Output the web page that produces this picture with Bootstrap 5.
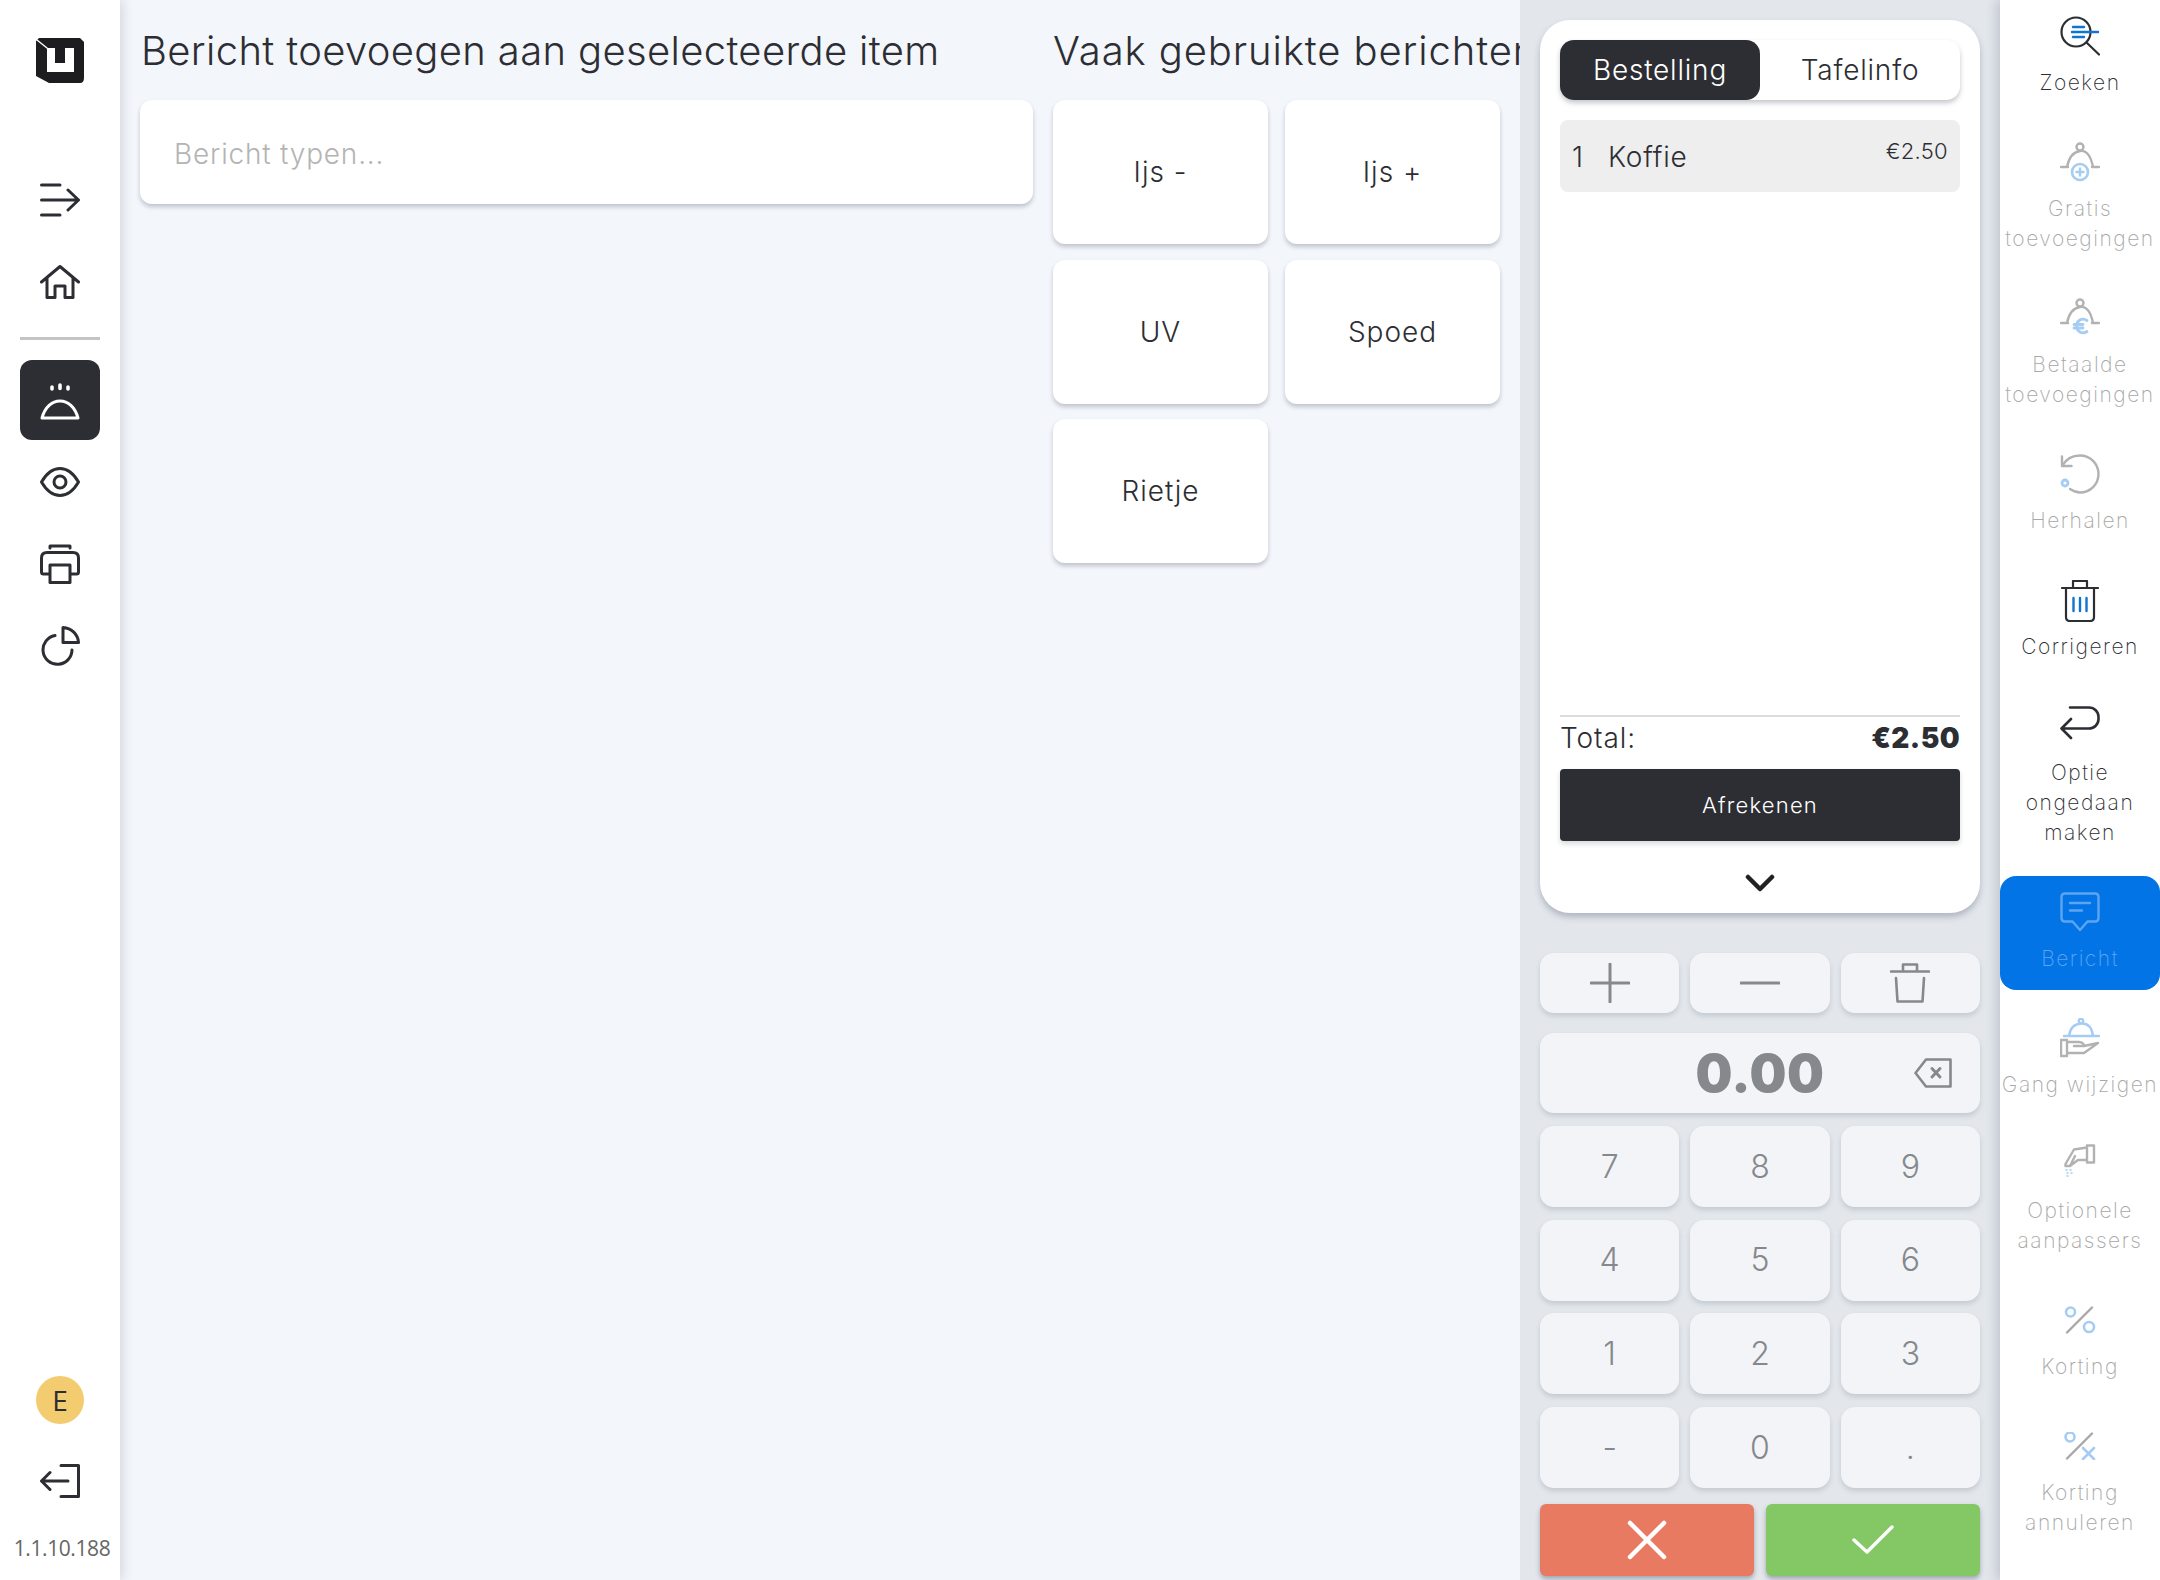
<!DOCTYPE html>
<html lang="nl">
<head>
  <meta charset="UTF-8" />
  <title>Bericht</title>
  <link href="https://cdn.jsdelivr.net/npm/bootstrap@5.3.3/dist/css/bootstrap.min.css" rel="stylesheet">
  <style>
    html, body { height: 100%; }
    body { width: 2160px; height: 1580px; overflow: hidden; background: #f3f6fb; color: #2d2e33; font-family: Inter, "Liberation Sans", sans-serif; font-weight: 300; }
    svg { display: block; fill: none; stroke-linecap: round; stroke-linejoin: round; }

    .left-bar { width: 120px; background: #fff; box-shadow: 3px 0 10px rgba(60,70,90,.16); z-index: 3; padding-top: 38px; }
    .logo-box { height: 122px; }
    .nav-box { width: 80px; height: 80px; margin-bottom: 2px; border-radius: 12px; color: #2d2e33; }
    .nav-box.is-active { background: #2d2e33; color: #fff; }
    .nav-rule { width: 80px; height: 3px; background: #c4c4c4; margin: 13px 0 20px; }
    .user-dot { width: 48px; height: 48px; border-radius: 50%; background: #f3cc70; font: 400 28px "Open Sans", sans-serif; color: #2d2e33; }
    .version-txt { font: 400 21px/30px "Open Sans", sans-serif; color: #666; letter-spacing: -.4px; margin: 35px 0 17px; padding-left: 4px; white-space: nowrap; }

    .msg-col { width: 913px; padding: 0 0 0 20px; }
    .freq-col { width: 487px; padding-left: 20px; overflow: hidden; }
    .head-txt { font-size: 40px; font-weight: 300; line-height: 48px; letter-spacing: .9px; margin: 27px 0 25px; white-space: nowrap; }
    .msg-col .head-txt { letter-spacing: .35px; padding-left: 1px; }
    .msg-input.form-control { height: 104px; border: 0; border-radius: 12px; padding: 4px 34px 0; font-size: 28px; font-weight: 300; letter-spacing: .8px; box-shadow: 0 3px 4px rgba(60,70,90,.28); }
    .msg-input::placeholder { color: #b4b4b4; }
    .tile-grid { display: grid; grid-template-columns: 215px 215px; grid-auto-rows: 144px; column-gap: 17px; row-gap: 15.5px; }
    .tile-btn.btn { background: #fff; border: 0; border-radius: 12px; color: #2d2e33; font-size: 28px; font-weight: 300; letter-spacing: 1px; box-shadow: 0 3px 4px rgba(60,70,90,.28); }

    .order-panel { width: 480px; background: #e3e7ec; padding: 20px 20px 0; }
    .order-card.card { height: 893px; border: 0; border-radius: 30px; padding: 20px 20px 0; box-shadow: 0 4px 6px rgba(60,70,90,.3); }
    .tab-wrap { height: 60px; border-radius: 14px; box-shadow: 0 3px 5px rgba(60,70,90,.3); }
    .tab-item { width: 200px; border-radius: 14px; font-size: 28px; font-weight: 300; letter-spacing: .8px; }
    .tab-item.is-active { background: #2d2e33; color: #fff; }
    .order-line { height: 72px; margin-top: 20px; background: #eeeeef; border-radius: 8px; padding: 0 12px; }
    .qty-txt { font-size: 28px; width: 36px; margin-top: 2px; }
    .item-txt { font-size: 28px; letter-spacing: .8px; margin-top: 2px; }
    .price-txt { font-size: 22px; letter-spacing: .3px; font-weight: 300; margin-bottom: 10px; }
    .total-row { border-top: 2px solid #dcdcdc; height: 54px; padding-bottom: 10px; font-size: 28px; letter-spacing: .9px; }
    .total-row b { font-weight: 900; letter-spacing: .4px; }
    .pay-btn.btn { height: 72px; border: 0; border-radius: 4px; background: #2d2e33; color: #fff; font-size: 22px; font-weight: 300; letter-spacing: 1.2px; box-shadow: 0 3px 5px rgba(60,70,90,.2); flex-shrink: 0; }
    .chev-box { height: 72px; padding-top: 14px; flex-shrink: 0; }

    .pad-grid { display: grid; grid-template-columns: 1fr 1fr 1fr; column-gap: 11px; }
    .pad-grid.tool-row { margin-top: 40px; grid-auto-rows: 60px; }
    .pad-grid.num-grid { margin-top: 13px; grid-auto-rows: 81px; row-gap: 12.7px; }
    .pad-btn.btn { background: #f3f4f7; border: 0; border-radius: 14px; padding: 0; color: #85888c; font-size: 32px; font-weight: 300; box-shadow: 0 3px 5px rgba(60,70,90,.18); }
    .amount-box { margin-top: 20px; height: 80px; background: #f3f4f7; border-radius: 14px; box-shadow: 0 3px 5px rgba(60,70,90,.18); }
    .amount-txt { font-size: 52px; font-weight: 900; color: #85888c; letter-spacing: .5px; padding-top: 1px; }
    .back-key { right: 28px; top: 25px; }
    .action-row { margin-top: 16px; gap: 12px; }
    .act-btn.btn { width: 214px; height: 72px; border: 0; border-radius: 6px; box-shadow: 0 3px 5px rgba(60,70,90,.4); padding: 0; }
    .act-no.btn { background: #e97a62; }
    .act-yes.btn { background: #84c866; }

    .right-bar { width: 160px; background: #fff; box-shadow: -4px 0 10px rgba(60,70,90,.2); z-index: 3; }
    .tool-item { padding: 16px 0 16px; margin-bottom: 12px; border-radius: 16px; color: #2d2e33; }
    .tool-ico { height: 40px; }
    .tool-lbl { margin-top: 12px; font-size: 21px; font-weight: 200; line-height: 30px; letter-spacing: 1.5px; text-align: center; white-space: nowrap; }
    .tool-item.is-off { color: #a8a8a8; }
    .tool-item.is-current { background: #0274e6; color: #5ea5f0; }
  </style>
</head>
<body class="d-flex">

<aside class="left-bar d-flex flex-column align-items-center flex-shrink-0">
  <div class="logo-box">
    <svg width="48" height="45" viewBox="0 0 48 45"><path fill="#1d1d20" d="M0 3 3 0H44L48 4V40Q48 45 44 45H13L0 38Z"/><path fill="#fff" d="M11 10H19V25H29V10H38V34H11Z"/><path stroke="#fff" stroke-width="1.500" d="M1 2 11 10"/></svg>
  </div>
  <div class="nav-box d-flex align-items-center justify-content-center">
    <svg width="40" height="34" viewBox="0 0 40 34" stroke="currentColor" stroke-width="3"><path d="M1.500 2H20M1.500 17H38M1.500 32H20M28 7 38.500 17 28 27"/></svg>
  </div>
  <div class="nav-box d-flex align-items-center justify-content-center">
    <svg width="40" height="34" viewBox="0 0 40 34" stroke="currentColor" stroke-width="3"><path d="M1.500 17 20 1.500 38.500 17M7 13V32.500H15V21H25V32.500H33V13"/></svg>
  </div>
  <div class="nav-rule"></div>
  <div class="nav-box is-active d-flex align-items-center justify-content-center">
    <svg width="40" height="40" viewBox="0 0 40 40" stroke="currentColor" stroke-width="3"><path stroke-width="3.600" d="M12 7V9M20 5V8.500M28 7V9"/><path d="M2 38C5 27 12 21 20 21S35 27 38 38Z"/></svg>
  </div>
  <div class="nav-box d-flex align-items-center justify-content-center">
    <svg width="40" height="30" viewBox="0 0 40 30" stroke="currentColor" stroke-width="3"><path d="M1.500 15C7 5.500 13 1.500 20 1.500S33 5.500 38.500 15C33 24.500 27 28.500 20 28.500S7 24.500 1.500 15Z"/><circle cx="20" cy="15" r="6"/></svg>
  </div>
  <div class="nav-box d-flex align-items-center justify-content-center">
    <svg width="40" height="40" viewBox="0 0 40 40" stroke="currentColor" stroke-width="3"><path d="M10 4V2H30V4M9 30H3.500Q1.500 30 1.500 28V14Q1.500 8.500 7 8.500H33Q38.500 8.500 38.500 14V28Q38.500 30 36.500 30H31"/><path d="M10 21H30V38.500H10Z"/></svg>
  </div>
  <div class="nav-box d-flex align-items-center justify-content-center">
    <svg width="40" height="40" viewBox="0 0 40 40" stroke="currentColor" stroke-width="3"><path d="M15 9.500A14.500 14.500 0 1 0 32 24"/><path d="M23 1.500C31.500 2 38 8.500 38.500 16.500H23Z"/></svg>
  </div>

  <div class="user-dot d-flex align-items-center justify-content-center mt-auto mb-4">E</div>
  <div class="mt-3">
    <svg width="40" height="34" viewBox="0 0 40 34" stroke="#2d2e33" stroke-width="3"><path d="M21 1.500H38.500V32.500H21M28 17H2M10 8.500 1.500 17 10 25.500"/></svg>
  </div>
  <div class="version-txt">1.1.10.188</div>
</aside>

<main class="d-flex flex-fill">
  <section class="msg-col flex-shrink-0">
    <h1 class="head-txt">Bericht toevoegen aan geselecteerde item</h1>
    <input class="form-control msg-input" type="text" placeholder="Bericht typen...">
  </section>
  <section class="freq-col flex-shrink-0">
    <h2 class="head-txt">Vaak gebruikte berichten</h2>
    <div class="tile-grid">
      <button class="btn tile-btn">Ijs -</button>
      <button class="btn tile-btn">Ijs +</button>
      <button class="btn tile-btn">UV</button>
      <button class="btn tile-btn">Spoed</button>
      <button class="btn tile-btn">Rietje</button>
    </div>
  </section>

  <section class="order-panel flex-shrink-0">
    <div class="card order-card">
      <div class="tab-wrap d-flex">
        <div class="tab-item is-active d-flex align-items-center justify-content-center">Bestelling</div>
        <div class="tab-item d-flex align-items-center justify-content-center">Tafelinfo</div>
      </div>
      <div class="order-line d-flex align-items-center">
        <span class="qty-txt">1</span>
        <span class="item-txt flex-fill">Koffie</span>
        <span class="price-txt">€2.50</span>
      </div>
      <div class="flex-fill"></div>
      <div class="total-row d-flex align-items-center justify-content-between"><span>Total:</span><b>€2.50</b></div>
      <button class="btn pay-btn w-100">Afrekenen</button>
      <div class="chev-box d-flex align-items-center justify-content-center">
        <svg width="30" height="20" viewBox="0 0 30 20" stroke="#222" stroke-width="4.500"><path d="M3 3 15 15 27 3"/></svg>
      </div>
    </div>

    <div class="pad-grid tool-row">
      <button class="btn pad-btn d-flex align-items-center justify-content-center"><svg width="40" height="40" viewBox="0 0 40 40" stroke="#85888c" stroke-width="3"><path d="M20 1V39M1 20H39"/></svg></button>
      <button class="btn pad-btn d-flex align-items-center justify-content-center"><svg width="40" height="6" viewBox="0 0 40 6" stroke="#85888c" stroke-width="3"><path d="M1 3H39"/></svg></button>
      <button class="btn pad-btn d-flex align-items-center justify-content-center"><svg width="40" height="40" viewBox="0 0 40 40" stroke="#85888c" stroke-width="2.600"><path d="M1 8.500H39M13 8V1.500H27V8M6 15 7.500 38.500H32.500L34 15"/></svg></button>
    </div>

    <div class="amount-box position-relative d-flex align-items-center justify-content-center">
      <span class="amount-txt">0.00</span>
      <svg class="back-key position-absolute" width="38" height="30" viewBox="0 0 38 30" stroke="#85888c" stroke-width="2.600"><path d="M12 1.500H36.500V28.500H12L1.500 15Z"/><path stroke-width="3" d="M18 10.500 26 19M26 10.500 18 19"/></svg>
    </div>

    <div class="pad-grid num-grid">
      <button class="btn pad-btn">7</button>
      <button class="btn pad-btn">8</button>
      <button class="btn pad-btn">9</button>
      <button class="btn pad-btn">4</button>
      <button class="btn pad-btn">5</button>
      <button class="btn pad-btn">6</button>
      <button class="btn pad-btn">1</button>
      <button class="btn pad-btn">2</button>
      <button class="btn pad-btn">3</button>
      <button class="btn pad-btn">-</button>
      <button class="btn pad-btn">0</button>
      <button class="btn pad-btn">.</button>
    </div>

    <div class="action-row d-flex">
      <button class="btn act-btn act-no d-flex align-items-center justify-content-center"><svg width="40" height="40" viewBox="0 0 40 40" stroke="#fff" stroke-width="4.500"><path d="M3 3 37 37M37 3 3 37"/></svg></button>
      <button class="btn act-btn act-yes d-flex align-items-center justify-content-center"><svg width="42" height="30" viewBox="0 0 42 30" stroke="#fff" stroke-width="3.400"><path d="M2 15 15 27 40 2"/></svg></button>
    </div>
  </section>
</main>

<aside class="right-bar flex-shrink-0">
  <div class="tool-item">
    <div class="tool-ico d-flex justify-content-center">
      <svg width="40" height="40" viewBox="0 0 40 40" stroke="#2d2e33" stroke-width="2.200"><circle cx="16" cy="16" r="14.500"/><path d="M26.500 26.500 39 38.500"/><path stroke="#0f74d2" stroke-width="2.400" d="M13 11H24M12 16H38M13 21H24"/></svg>
    </div>
    <div class="tool-lbl">Zoeken</div>
  </div>
  <div class="tool-item is-off">
    <div class="tool-ico d-flex justify-content-center">
      <svg width="40" height="40" viewBox="0 0 40 40" stroke="#b2b2b2" stroke-width="2.400"><circle cx="20" cy="5" r="3.500"/><path d="M7 25C9 15 13 10 20 9S31 15 33 25M1 25H8M32 25H39"/><circle cx="20" cy="30" r="8" stroke="#a5cdf3" stroke-width="2.600"/><path stroke="#a5cdf3" d="M20 26.500V33.500M16.500 30H23.500"/></svg>
    </div>
    <div class="tool-lbl">Gratis<br>toevoegingen</div>
  </div>
  <div class="tool-item is-off">
    <div class="tool-ico d-flex justify-content-center">
      <svg width="40" height="40" viewBox="0 0 40 40" stroke="#b2b2b2" stroke-width="2.400"><circle cx="20" cy="5" r="3.500"/><path d="M7 25C9 15 13 10 20 9S31 15 33 25M1 25H8M32 25H39"/><path stroke="#a5cdf3" stroke-width="2.800" d="M27 22.500C22 19 16.500 23 16.500 28S22 37 27 33.500M14 26.500H23M14 30H23"/></svg>
    </div>
    <div class="tool-lbl">Betaalde<br>toevoegingen</div>
  </div>
  <div class="tool-item is-off">
    <div class="tool-ico d-flex justify-content-center">
      <svg width="40" height="40" viewBox="0 0 40 40" stroke="#b2b2b2" stroke-width="2.400"><path d="M2 12C6 5 12 1.500 20 1.500A18.500 18.500 0 0 1 20 38.500C16 38.500 13 37 10 35M2 2.500V12H11.500"/><circle cx="5" cy="29" r="3" stroke="#a5cdf3" stroke-width="2.800"/></svg>
    </div>
    <div class="tool-lbl">Herhalen</div>
  </div>
  <div class="tool-item">
    <div class="tool-ico d-flex justify-content-center">
      <svg width="38" height="42" viewBox="0 0 38 42" stroke="#2d2e33" stroke-width="2.200"><path d="M1 8H37M12 7V1H26V7M5 8V37Q5 41 9 41H29Q33 41 33 37V8"/><path stroke="#0f74d2" stroke-width="2.400" d="M12.500 18V31M19 18V31M25.500 18V31"/></svg>
    </div>
    <div class="tool-lbl">Corrigeren</div>
  </div>
  <div class="tool-item">
    <div class="tool-ico d-flex justify-content-center">
      <svg width="40" height="34" viewBox="0 0 40 34" stroke="#2d2e33" stroke-width="2.600"><path d="M10 1.500H29A9.500 9.500 0 0 1 38.500 11V13A9.500 9.500 0 0 1 29 22.500H2M11 13 1.500 22.500 11 32"/></svg>
    </div>
    <div class="tool-lbl">Optie<br>ongedaan<br>maken</div>
  </div>
  <div class="tool-item is-current">
    <div class="tool-ico d-flex justify-content-center">
      <svg width="40" height="40" viewBox="0 0 40 40" stroke="#5ea5f0" stroke-width="2.400"><path d="M5 1.500H35Q38.500 1.500 38.500 5V26Q38.500 29.500 35 29.500H27.500L20 38 12.500 29.500H5Q1.500 29.500 1.500 26V5Q1.500 1.500 5 1.500Z"/><path d="M10 11H30M10 18.500H22"/></svg>
    </div>
    <div class="tool-lbl">Bericht</div>
  </div>
  <div class="tool-item is-off">
    <div class="tool-ico d-flex justify-content-center">
      <svg width="40" height="40" viewBox="0 0 40 40" stroke="#b2b2b2" stroke-width="2.400"><g stroke="#a5cdf3"><circle cx="21" cy="3" r="2.200"/><path d="M9 18C10 10 14 6 21 5.500S32 10 33 18M4 18H39"/></g><path d="M1 22H7V38H1ZM7 24H19C22 24 24 26 24 28H14M24 28 38 25 24 35H7"/></svg>
    </div>
    <div class="tool-lbl">Gang wijzigen</div>
  </div>
  <div class="tool-item is-off">
    <div class="tool-ico d-flex justify-content-center">
      <svg width="32" height="33" viewBox="0 0 32 33" stroke="#b2b2b2" stroke-width="2.400"><path d="M23 1.500H30V18.500H23ZM23 3.500 10 5.500 1.500 20V22H6L11 12M23 16H14L6 22"/><path stroke="#a5cdf3" stroke-width="1.600" stroke-dasharray="1 3" d="M2 26H9M3 29H8M3 32H7"/></svg>
    </div>
    <div class="tool-lbl">Optionele<br>aanpassers</div>
  </div>
  <div class="tool-item is-off">
    <div class="tool-ico d-flex justify-content-center align-items-center">
      <svg width="32" height="28" viewBox="0 0 32 28" stroke="#a8a8a8" stroke-width="2.400"><path d="M28 1.500 3 26.500"/><circle cx="6.500" cy="6" r="4.500" stroke="#a5cdf3" stroke-width="2.600"/><circle cx="25" cy="21" r="5" stroke="#a5cdf3" stroke-width="2.600"/></svg>
    </div>
    <div class="tool-lbl">Korting</div>
  </div>
  <div class="tool-item is-off">
    <div class="tool-ico d-flex justify-content-center align-items-center">
      <svg width="32" height="28" viewBox="0 0 32 28" stroke="#a8a8a8" stroke-width="2.400"><path d="M28 1.500 3 26.500"/><circle cx="6" cy="5" r="4.500" stroke="#a5cdf3" stroke-width="2.600"/><path stroke="#a5cdf3" stroke-width="2.600" d="M19 16 30 27M30 16 19 27"/></svg>
    </div>
    <div class="tool-lbl">Korting<br>annuleren</div>
  </div>
</aside>

<script src="https://cdn.jsdelivr.net/npm/bootstrap@5.3.3/dist/js/bootstrap.bundle.min.js"></script>
</body>
</html>
